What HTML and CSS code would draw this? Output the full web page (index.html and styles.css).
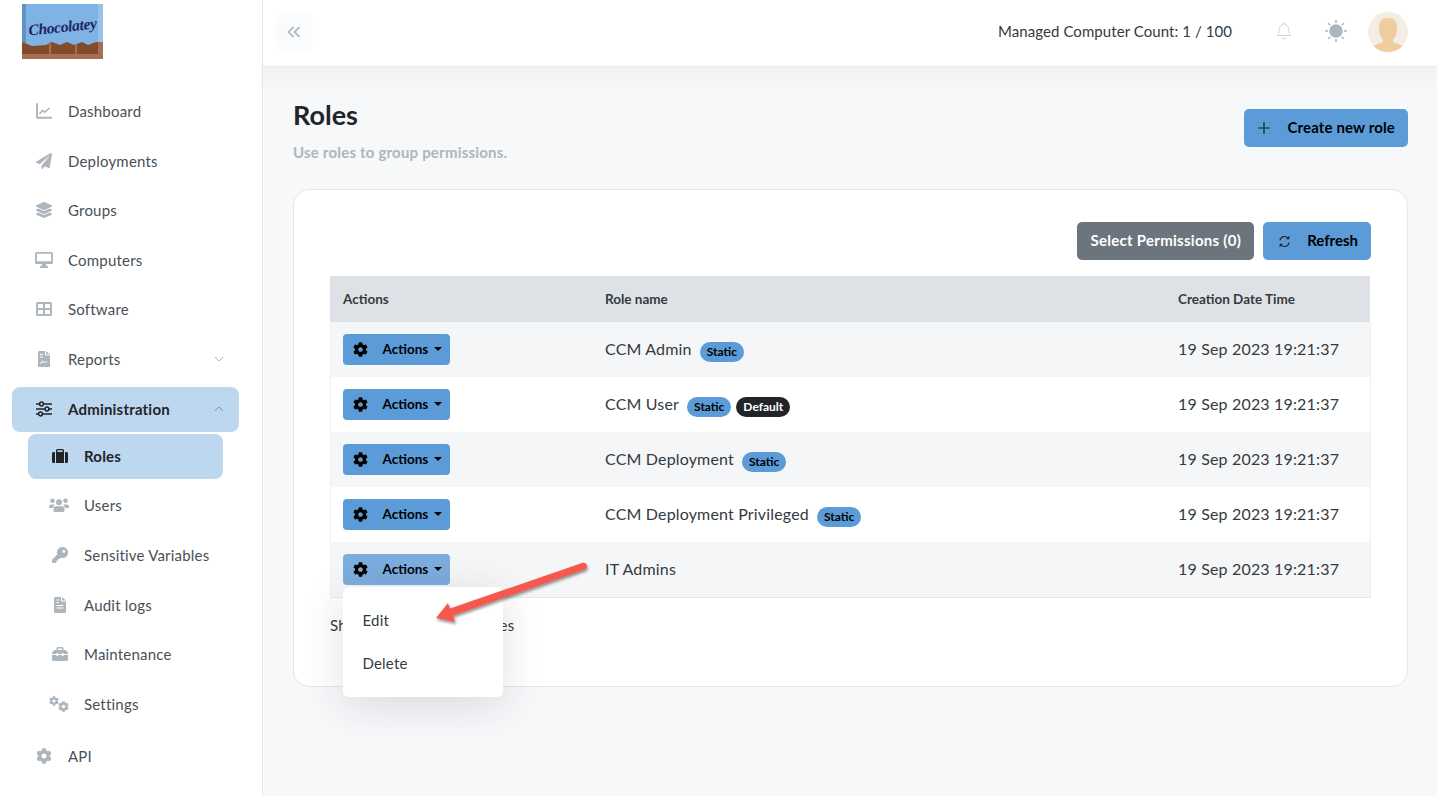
FILE: index.html
```html
<!DOCTYPE html>
<html lang="en">
<head>
<meta charset="utf-8">
<title>Roles</title>
<link rel="stylesheet" href="styles.css">
</head>
<body>
<svg class="defs" width="0" height="0" aria-hidden="true">
  <symbol id="i-chart" viewBox="0 0 16 16"><path d="M1 1v13.800h15" fill="none" stroke="currentColor" stroke-width="1.900" stroke-linecap="round"/><path d="M3.500 11l3-3.600 2.300 1.800L13.500 5" fill="none" stroke="currentColor" stroke-width="1.600"/></symbol>
  <symbol id="i-plane" viewBox="0 0 512 512"><path fill="currentColor" d="M476 3.2L12.5 270.6c-18.1 10.4-15.8 35.6 2.2 43.2L121 358.4l287.3-253.2c5.5-4.9 13.3 2.6 8.6 8.3L176 407v80.5c0 23.6 28.5 32.9 42.5 15.8L282 426l124.6 52.2c14.2 6 30.4-2.9 33-18.2l72-432C515 7.8 493.3-6.8 476 3.2z"/></symbol>
  <symbol id="i-layers" viewBox="0 0 512 512"><path fill="currentColor" d="M12.41 148.02l232.94 105.67c6.8 3.09 14.49 3.09 21.29 0l232.94-105.67c16.55-7.51 16.55-32.52 0-40.03L266.65 2.31a25.607 25.607 0 0 0-21.29 0L12.41 107.98c-16.55 7.51-16.55 32.53 0 40.04zm487.18 88.28l-58.09-26.33-161.64 73.27c-7.56 3.43-15.59 5.17-23.86 5.17s-16.29-1.74-23.86-5.17L70.51 209.97l-58.1 26.33c-16.55 7.5-16.55 32.5 0 40l232.94 105.59c6.8 3.08 14.49 3.08 21.29 0L499.59 276.3c16.55-7.5 16.55-32.5 0-40zm0 127.8l-57.87-26.23-161.86 73.37c-7.56 3.43-15.59 5.17-23.86 5.17s-16.29-1.74-23.86-5.17L70.29 337.87 12.41 364.1c-16.55 7.5-16.55 32.5 0 40l232.94 105.59c6.8 3.08 14.49 3.08 21.29 0L499.59 404.1c16.55-7.5 16.55-32.5 0-40z"/></symbol>
  <symbol id="i-desktop" viewBox="0 0 18 16"><path fill="currentColor" fill-rule="evenodd" d="M1.500 0h15A1.500 1.500 0 0 1 18 1.500v9a1.500 1.500 0 0 1-1.500 1.500h-15A1.500 1.500 0 0 1 0 10.500v-9A1.500 1.500 0 0 1 1.500 0zM1.800 1.800v7.500h14.400V1.800z"/><path fill="currentColor" d="M7 12h4l.5 2.200H13V16H5v-1.800h1.500z"/></symbol>
  <symbol id="i-grid" viewBox="0 0 16 14"><path fill="currentColor" fill-rule="evenodd" d="M1.500 0h13A1.500 1.500 0 0 1 16 1.500v11a1.500 1.500 0 0 1-1.500 1.500h-13A1.500 1.500 0 0 1 0 12.500v-11A1.500 1.500 0 0 1 1.500 0zM2 2v4h5V2zM9 2v4h5V2zM2 8v4h5V8zM9 8v4h5V8z"/></symbol>
  <symbol id="i-report" viewBox="0 0 12 16"><path fill="currentColor" fill-rule="evenodd" d="M1.200 0H7v4.500h5v10.300a1.200 1.200 0 0 1-1.200 1.200H1.200A1.200 1.200 0 0 1 0 14.800V1.200A1.200 1.200 0 0 1 1.200 0zM2 3v1h3V3zM2 5.500v1h3v-1zM2 12.500h1.500l1.200-1.800 1.300 1.300 1-.7h2.500v-.9H6.800l-.8.500-1.500-1.500-1.500 2H2z"/><path fill="currentColor" d="M8 0l4 3.500H8z"/></symbol>
  <symbol id="i-sliders" viewBox="0 0 16 16"><g fill="none" stroke="currentColor" stroke-width="1.500"><path d="M0 3h3.500M7.500 3H16M0 8h9M13 8h3M0 13h2.500M6.500 13H16"/><circle cx="5.500" cy="3" r="1.900"/><circle cx="11" cy="8" r="1.900"/><circle cx="4.500" cy="13" r="1.900"/></g></symbol>
  <symbol id="i-suitcase" viewBox="0 0 16 14"><path fill="currentColor" fill-rule="evenodd" d="M4 3V1.500A1.500 1.500 0 0 1 5.500 0h5A1.500 1.500 0 0 1 12 1.500V3h0v11H4zM5.500 1.300V3h5V1.300z"/><path fill="currentColor" d="M0 4.500A1.500 1.500 0 0 1 1.500 3H3v11H1.500A1.500 1.500 0 0 1 0 12.500zM13 3h1.500A1.500 1.500 0 0 1 16 4.500v8a1.500 1.500 0 0 1-1.500 1.500H13z"/></symbol>
  <symbol id="i-users" viewBox="0 0 20 14"><g fill="currentColor"><circle cx="3.500" cy="2.800" r="2.300"/><circle cx="16.500" cy="2.800" r="2.300"/><circle cx="10" cy="4.300" r="3"/><path d="M0 9a2.500 2.500 0 0 1 2.500-2.500h2c.6 0 1.100.2 1.500.5-1.100.7-1.900 1.800-2 3H0zM20 9a2.500 2.500 0 0 0-2.500-2.500h-2c-.6 0-1.100.2-1.500.5 1.100.7 1.900 1.800 2 3h4zM7 8.200h6A2.500 2.500 0 0 1 15.500 10.700V12.800a1.200 1.200 0 0 1-1.200 1.200H5.700a1.200 1.200 0 0 1-1.200-1.200V10.700A2.500 2.500 0 0 1 7 8.200z"/></g></symbol>
  <symbol id="i-key" viewBox="0 0 16 16"><path fill="currentColor" fill-rule="evenodd" d="M10.500 0a5.500 5.500 0 1 1-1.700 10.700L7.500 12H6v1.500H4.500V15l-.8 1H.8a.8.800 0 0 1-.8-.8v-2.400l5.300-5.300A5.500 5.500 0 0 1 10.500 0zm1.300 2.700a1.500 1.500 0 1 0 0 3 1.500 1.500 0 0 0 0-3z"/></symbol>
  <symbol id="i-file" viewBox="0 0 12 16"><path fill="currentColor" fill-rule="evenodd" d="M1.200 0H7v4.500h5v10.300a1.200 1.200 0 0 1-1.200 1.200H1.200A1.200 1.200 0 0 1 0 14.800V1.200A1.200 1.200 0 0 1 1.200 0zM2.500 2.500v1H5v-1zM2.500 5v1H5V5zM2.500 8v1h7V8zM2.500 10.500v1h7v-1z"/><path fill="currentColor" d="M8 0l4 3.500H8z"/></symbol>
  <symbol id="i-toolbox" viewBox="0 0 16 14"><path fill="currentColor" d="M4.500 3V1.500A1.500 1.500 0 0 1 6 0h4a1.500 1.500 0 0 1 1.500 1.500V3h2.200L16 5.500V7H11.500V6H10v1H6V6H4.500v1H0V5.500L2.300 3zM6 1.400V3h4V1.400zM0 8h4.500v1H6V8h4v1h1.500V8H16v4.500a1.500 1.500 0 0 1-1.500 1.500h-13A1.500 1.500 0 0 1 0 12.500z"/></symbol>
  <symbol id="i-gear" viewBox="0 0 512 512"><path fill="currentColor" d="M487.400 315.700l-42.600-24.600c4.300-23.200 4.300-47 0-70.200l42.600-24.600c4.900-2.800 7.100-8.600 5.500-14-11.100-35.600-30-67.800-54.700-94.600-3.800-4.100-10-5.100-14.800-2.300L380.800 110c-17.900-15.400-38.500-27.300-60.800-35.100V25.800c0-5.600-3.900-10.500-9.400-11.700-36.700-8.200-74.300-7.800-109.200 0-5.500 1.200-9.400 6.100-9.400 11.700V75c-22.200 7.900-42.800 19.800-60.800 35.100L88.700 85.500c-4.900-2.800-11-1.900-14.800 2.300-24.700 26.700-43.600 58.900-54.700 94.600-1.700 5.400.6 11.200 5.500 14L67.300 221c-4.300 23.200-4.300 47 0 70.200l-42.600 24.600c-4.900 2.800-7.100 8.600-5.500 14 11.100 35.600 30 67.800 54.700 94.600 3.800 4.100 10 5.100 14.800 2.300l42.600-24.600c17.900 15.400 38.500 27.300 60.800 35.100v49.200c0 5.600 3.900 10.500 9.400 11.700 36.700 8.200 74.300 7.800 109.200 0 5.500-1.200 9.400-6.100 9.400-11.700v-49.200c22.200-7.900 42.800-19.800 60.800-35.100l42.600 24.600c4.900 2.800 11 1.900 14.800-2.300 24.700-26.700 43.600-58.900 54.700-94.600 1.500-5.500-.7-11.300-5.600-14.100zM256 336c-44.100 0-80-35.900-80-80s35.900-80 80-80 80 35.900 80 80-35.900 80-80 80z"/></symbol>
  <symbol id="i-cogs" viewBox="0 0 20 16"><use href="#i-gear" x="0" y="0" width="10" height="10"/><use href="#i-gear" x="9" y="5" width="11" height="11"/></symbol>
  <symbol id="i-sync" viewBox="0 0 16 16"><g fill="none" stroke="currentColor" stroke-width="1.400"><path d="M2.400 6.500A5.800 5.800 0 0 1 12.600 4"/><path d="M13.600 9.500A5.800 5.800 0 0 1 3.400 12"/></g><path fill="currentColor" d="M14 .8v4.400H9.600zM2 15.200v-4.400h4.400z"/></symbol>
</svg>

<div class="app">
  <aside class="sidebar">
    <div class="logo">
      <svg width="81" height="55" viewBox="0 0 81 55" role="img" aria-label="Chocolatey">
        <rect width="81" height="55" fill="#7fb3e3"/>
        <rect width="4" height="40" fill="#5f93c6"/>
        <rect x="76" width="5" height="40" fill="#97c3ea"/>
        <path d="M0 38l10 4 14-1 6-3 8 3 7-3 7 3 8-3 6 3 8-3 7 1v17H0z" fill="#834a2c"/>
        <path d="M0 50h81v5H0zM27 38h2v14h-2zM53 40h2v12h-2zM76 38h5v17h-5z" fill="#a56f54"/>
        <text x="41" y="28" text-anchor="middle" class="logo-text" transform="rotate(-6 41 28)">Chocolatey</text>
      </svg>
    </div>
    <nav class="nav">
      <a class="item"><svg class="ico"><use href="#i-chart"/></svg><span>Dashboard</span></a>
      <a class="item"><svg class="ico"><use href="#i-plane"/></svg><span>Deployments</span></a>
      <a class="item"><svg class="ico"><use href="#i-layers"/></svg><span>Groups</span></a>
      <a class="item"><svg class="ico ico-wide"><use href="#i-desktop"/></svg><span>Computers</span></a>
      <a class="item"><svg class="ico"><use href="#i-grid"/></svg><span>Software</span></a>
      <a class="item"><svg class="ico"><use href="#i-report"/></svg><span>Reports</span><svg class="chev" viewBox="0 0 10 6"><path d="M1 1l4 4 4-4"/></svg></a>
      <a class="item active"><svg class="ico"><use href="#i-sliders"/></svg><span>Administration</span><svg class="chev up" viewBox="0 0 10 6"><path d="M1 5l4-4 4 4"/></svg></a>
      <div class="sub">
        <a class="item active"><svg class="ico"><use href="#i-suitcase"/></svg><span>Roles</span></a>
        <a class="item"><svg class="ico ico-wide"><use href="#i-users"/></svg><span>Users</span></a>
        <a class="item"><svg class="ico"><use href="#i-key"/></svg><span>Sensitive Variables</span></a>
        <a class="item"><svg class="ico"><use href="#i-file"/></svg><span>Audit logs</span></a>
        <a class="item"><svg class="ico"><use href="#i-toolbox"/></svg><span>Maintenance</span></a>
        <a class="item"><svg class="ico ico-wide"><use href="#i-cogs"/></svg><span>Settings</span></a>
      </div>
      <a class="item"><svg class="ico"><use href="#i-gear"/></svg><span>API</span></a>
    </nav>
  </aside>

  <div class="main">
    <header class="topbar">
      <button class="collapse" aria-label="Collapse"><svg viewBox="0 0 14 12" width="14" height="12"><path d="M6.500 1L1.500 6l5 5M12.500 1l-5 5 5 5"/></svg></button>
      <div class="top-right">
        <span class="count">Managed Computer Count: 1 / 100</span>
        <svg class="bell" viewBox="0 0 16 18" width="16" height="18"><path d="M8 1a1 1 0 0 1 1 1v.6c2.300.5 3.800 2.400 3.800 4.900 0 3.500.8 4.700 1.900 6H1.300c1.100-1.300 1.900-2.500 1.900-6 0-2.500 1.500-4.400 3.800-4.900V2a1 1 0 0 1 1-1zM6.200 15.500a1.900 1.900 0 0 0 3.600 0"/></svg>
        <svg class="sun" viewBox="0 0 24 24" width="24" height="24"><circle cx="12" cy="12" r="6"/><path d="M12 1v3M12 20v3M1 12h3M20 12h3M4.200 4.200l2.100 2.100M17.700 17.700l2.100 2.100M4.200 19.800l2.100-2.100M17.700 6.300l2.100-2.100"/></svg>
        <svg class="avatar" viewBox="0 0 40 40" width="40" height="40">
          <defs><clipPath id="av"><circle cx="20" cy="20" r="20"/></clipPath></defs>
          <g clip-path="url(#av)"><rect width="40" height="40" fill="#f3ede4"/>
          <path d="M2 40c1-6 7-8 13-9.500v-3c-3-2.500-4-7-4-12C11 9 14 6 20 6s9 3 9 9.500c0 5-1 9.500-4 12v3c6 1.500 12 3.500 13 9.500z" fill="#f0cda0"/></g>
        </svg>
      </div>
    </header>

    <main class="content">
      <div class="page-head">
        <div>
          <h1>Roles</h1>
          <p class="lead">Use roles to group permissions.</p>
        </div>
        <button class="btn btn-primary btn-create"><svg class="btn-ico" viewBox="0 0 12 12" width="12" height="12"><path d="M6 0v12M0 6h12" stroke="#212529" stroke-width="1.200"/></svg>Create new role</button>
      </div>

      <section class="card">
        <div class="toolbar">
          <button class="btn btn-muted">Select Permissions (0)</button>
          <button class="btn btn-primary btn-refresh"><svg class="btn-ico" width="13" height="13"><use href="#i-sync"/></svg>Refresh</button>
        </div>
        <table class="table">
          <colgroup><col class="c1"><col class="c2"><col class="c3"></colgroup>
          <thead><tr><th>Actions</th><th>Role name</th><th>Creation Date Time</th></tr></thead>
          <tbody>
            <tr><td class="act"><button class="btn-act"><svg width="15" height="15"><use href="#i-gear"/></svg>Actions<i class="caret"></i></button></td><td class="name">CCM Admin<span class="badge">Static</span></td><td class="date">19 Sep 2023 19:21:37</td></tr>
            <tr><td class="act"><button class="btn-act"><svg width="15" height="15"><use href="#i-gear"/></svg>Actions<i class="caret"></i></button></td><td class="name">CCM User<span class="badge">Static</span><span class="badge dark">Default</span></td><td class="date">19 Sep 2023 19:21:37</td></tr>
            <tr><td class="act"><button class="btn-act"><svg width="15" height="15"><use href="#i-gear"/></svg>Actions<i class="caret"></i></button></td><td class="name">CCM Deployment<span class="badge">Static</span></td><td class="date">19 Sep 2023 19:21:37</td></tr>
            <tr><td class="act"><button class="btn-act"><svg width="15" height="15"><use href="#i-gear"/></svg>Actions<i class="caret"></i></button></td><td class="name">CCM Deployment Privileged<span class="badge">Static</span></td><td class="date">19 Sep 2023 19:21:37</td></tr>
            <tr><td class="act menu-cell"><button class="btn-act open"><svg width="15" height="15"><use href="#i-gear"/></svg>Actions<i class="caret"></i></button>
              <div class="menu"><a>Edit</a><a>Delete</a></div></td><td class="date">IT Admins</td><td class="date">19 Sep 2023 19:21:37</td></tr>
          </tbody>
        </table>
        <p class="info">Showing 1 to 5 of 5 entries</p>
      </section>
    </main>
  </div>
</div>

<svg class="arrow" width="170" height="80" viewBox="0 0 170 80" aria-hidden="true">
  <defs><filter id="as" x="-20%" y="-30%" width="140%" height="170%"><feDropShadow dx="1" dy="2" stdDeviation="1.500" flood-color="#000" flood-opacity=".45"/></filter></defs>
  <path filter="url(#as)" fill="#f5594d" d="M6 60L18 45l2 5.500L152 5c2.500-.8 4.500.5 4.800 2.300.3 2-.8 3.700-2.800 4.400L23 57.500l2 6.500z"/>
</svg>
</body>
</html>
```
FILE: styles.css
```css
* { box-sizing: border-box; }
html, body { margin: 0; height: 100%; }
body {
  font-family: "Lato", "Noto Sans", sans-serif;
  font-size: 15px;
  color: #212529;
  background: #f7f8fa;
  overflow: hidden;
  position: relative;
}
.defs { position: absolute; }
.app { display: flex; height: 796px; }

/* sidebar */
.sidebar {
  width: 263px;
  flex: none;
  background: #fff;
  border-right: 1px solid #e6e8ec;
  padding: 4px 0 0;
}
.logo { padding-left: 22px; height: 85.500px; }
.logo svg { display: block; }
.logo-text {
  font-family: "Liberation Serif", serif;
  font-style: italic;
  font-weight: 700;
  font-size: 15.500px;
  letter-spacing: -.3px;
  fill: #1b2464;
}
.nav { display: flex; flex-direction: column; gap: 4.620px; padding: 0 23px 0 12px; }
.item {
  display: flex;
  align-items: center;
  height: 45px;
  padding: 0 15px 2px 23px;
  border-radius: 8px;
  color: #495057;
  letter-spacing: .2px;
}
.item span { flex: 1; white-space: nowrap; }
.ico { width: 16px; height: 16px; margin: 0 16px 0 1px; color: #adb5bd; flex: none; }
.ico-wide { width: 18px; margin: 0 15px 0 0; }
.item.active { background: #bdd7ef; color: #212529; font-weight: 700; }
.item.active .ico { color: #212529; }
.chev { width: 10px; height: 6px; flex: none; fill: none; stroke: #adb5bd; stroke-width: 1; }
.chev.up { stroke: #5a9bd8; }
.sub { display: flex; flex-direction: column; gap: 4.620px; padding: 0 16px; margin: -2.600px 0 3px; }
.sub .ico-wide { width: 20px; margin: 0 15px 0 -2px; }

/* main */
.main { flex: 1; min-width: 0; display: flex; flex-direction: column; }
.topbar {
  height: 67px;
  flex: none;
  background: #fff;
  border-bottom: 1px solid #e9ebee;
  display: flex;
  align-items: center;
  justify-content: space-between;
  padding: 0 29px 0 13px;
}
.collapse {
  width: 36px;
  height: 36px;
  border: 0;
  border-radius: 8px;
  background: #fafbfc;
  box-shadow: 0 0 4px #fafbfc;
  display: flex;
  align-items: center;
  justify-content: center;
  margin-top: -3px;
  padding: 0;
}
.collapse path { fill: none; stroke: #b4bbc2; stroke-width: 1.900; }
.top-right { display: flex; align-items: center; margin-top: -5px; }
.count { color: #343a40; margin-right: 44px; letter-spacing: .07px; }
.bell { fill: none; stroke: #ced4da; stroke-width: 1; margin-right: 32px; }
.sun { margin-right: 20px; fill: #adb5bd; stroke: #adb5bd; stroke-width: 1.600; }
.avatar { display: block; margin-top: 2px; }

.content {
  flex: 1;
  padding: 32px 29px 0 30px;
  background: linear-gradient(#f1f2f4, #f7f8fa 28px);
}
.page-head { display: flex; justify-content: space-between; align-items: flex-start; height: 90px; }
h1 { margin: -1px 0 0; font-size: 27px; line-height: 34px; font-weight: 700; color: #212529; }
.lead { margin: 10px 0 0; font-size: 15px; line-height: 20px; font-weight: 700; color: #adb5bd; letter-spacing: .2px; }
.btn {
  height: 38px;
  border: 0;
  border-radius: 5px;
  font: 700 15px "Lato", "Noto Sans", sans-serif;
  color: #000;
  display: inline-flex;
  align-items: center;
  padding: 0 13px 2px;
}
.btn-primary { background: #5a9bd8; }
.btn-muted { background: #6c757d; color: #fff; letter-spacing: .28px; }
.btn-ico { margin: 2px 17px 0 2px; color: #212529; }
.btn-create { margin-top: 10px; padding-left: 12px; letter-spacing: .14px; }
.btn-refresh .btn-ico { margin-right: 16px; }

.card {
  background: #fff;
  border: 1px solid #e3e6ea;
  border-radius: 16px;
  height: 498px;
  padding: 32px 36px 0;
}
.toolbar { display: flex; justify-content: flex-end; gap: 9px; margin-bottom: 16px; }
.table { width: 1040px; margin-left: -.500px; border-collapse: collapse; table-layout: fixed; }
.c1 { width: 262px; }
.c2 { width: 573px; }
.c3 { width: 205px; }
th {
  height: 46px;
  background: #dee2e6;
  text-align: left;
  padding: 0 13px;
  font-size: 13.500px;
  font-weight: 700;
  color: #343a40;
}
td { height: 55px; padding: 0 13px; color: #343a40; font-size: 16px; letter-spacing: .17px; }
td.act { padding-left: 12px; }
td.date { padding-bottom: 2px; }
td.name { padding-top: 2px; }
tbody tr:nth-child(odd) td { background: #f5f6f8; }
tbody tr:last-child td { border-bottom: 1px solid #e6e8ec; }
td:first-child { border-left: 1px solid #eef0f2; }
td:last-child { border-right: 1px solid #eef0f2; }
.btn-act {
  height: 31px;
  width: 107px;
  border: 0;
  border-radius: 4px;
  background: #5a9bd8;
  color: #000;
  font: 700 13.500px "Lato", "Noto Sans", sans-serif;
  display: flex;
  align-items: center;
  padding: 0 0 2px 10px;
}
.btn-act svg { margin: 2px 15px 0 0; color: #000; flex: none; }
.btn-act.open { background: #7badde; padding-bottom: 1px; }
.caret {
  margin-left: 6px;
  width: 0;
  height: 0;
  border: 4px solid transparent;
  border-top-color: #000;
  border-bottom-width: 0;
}
.badge {
  display: inline-block;
  height: 20px;
  line-height: 20px;
  padding: 0 7px;
  margin-left: 8px;
  border-radius: 10px;
  background: #5a9bd8;
  color: #000;
  font-size: 12px;
  font-weight: 700;
  letter-spacing: 0;
  vertical-align: -1px;
}
.badge + .badge { margin-left: 5px; }
.badge.dark { background: #212529; color: #fff; }
.menu-cell { position: relative; }
.menu {
  position: absolute;
  left: 12px;
  top: 45px;
  width: 160px;
  height: 110px;
  background: #fff;
  border-radius: 6px;
  box-shadow: 0 8px 40px rgba(33, 37, 41, .14);
  padding: 12px 0;
  z-index: 2;
}
.menu a { display: flex; align-items: center; height: 43px; padding: 0 0 2px 20px; color: #343a40; font-size: 15px; letter-spacing: .2px; }
.info { margin: 18px 0 0; font-size: 15px; color: #343a40; letter-spacing: .25px; }
.arrow { position: absolute; left: 430px; top: 558px; z-index: 5; }
```
